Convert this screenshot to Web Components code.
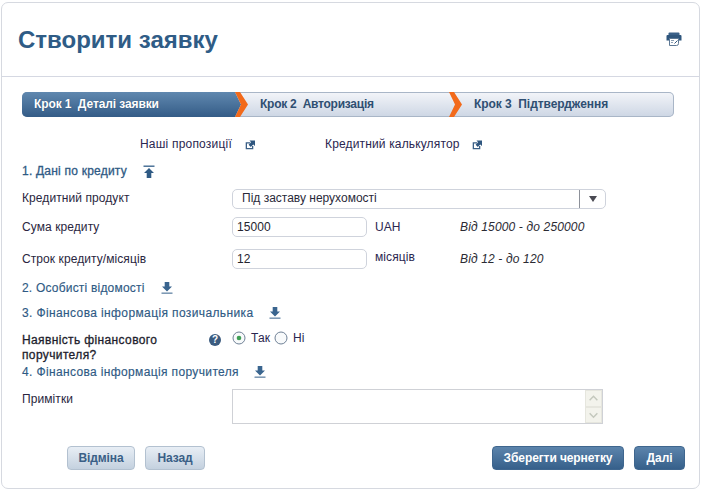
<!DOCTYPE html>
<html lang="uk"><head><meta charset="utf-8"><title>Створити заявку</title>
<style>
html,body{margin:0;padding:0;background:#fff}
body{font:12px/15px "Liberation Sans",Arial,sans-serif;color:#2a2640;width:702px;height:491px;overflow:hidden}
</style></head><body>
<app-card>
  <app-header slot="header" title-text="Створити заявку"></app-header>
  <step-bar></step-bar>
  <link-row></link-row>
  <section-title icon="up" gap="16" style="margin-top:6px;letter-spacing:.22px;-webkit-text-stroke:.3px #2f5a84">1. Дані по кредиту</section-title>
  <form-row label="Кредитний продукт" style="margin-top:8px;height:20px;--lh:19px"><select-box>Під заставу нерухомості</select-box></form-row>
  <form-row label="Сума кредиту" style="margin-top:8px;height:20px"><text-box>15000</text-box><unit-hint unit="UAH" hint="Від 15000 - до 250000"></unit-hint></form-row>
  <form-row label="Строк кредиту/місяців" style="margin-top:12px;height:20px"><text-box>12</text-box><unit-hint up unit="місяців" hint="Від 12 - до 120"></unit-hint></form-row>
  <section-title icon="down" gap="16" style="margin-top:9px;letter-spacing:.2px">2. Особисті відомості</section-title>
  <section-title icon="down" gap="15" style="margin-top:5px;letter-spacing:.38px">3. Фінансова інформація позичальника</section-title>
  <yes-no style="margin-top:10px"></yes-no>
  <section-title icon="down" gap="15" style="margin-top:-2px;letter-spacing:.36px">4. Фінансова інформація поручителя</section-title>
  <form-row label="Примітки" style="margin-top:7px;height:35px"><note-box></note-box></form-row>
  <button-bar></button-bar>
</app-card>
<script>
const el=(name,html)=>customElements.define(name,class extends HTMLElement{
  constructor(){super();this.attachShadow({mode:'open'}).innerHTML=typeof html==='function'?html(this):html;}
});
el('app-card',`<style>
:host{display:block;box-sizing:border-box;width:699px;height:487px;margin:2px 0 0 1px;border:1px solid #d6d9e0;border-radius:7px;background:#fff}
.body{display:flex;flex-direction:column;padding:15px 0 0 20px}
</style><slot name="header"></slot><div class="body"><slot></slot></div>`);
el('app-header',`<style>
:host{display:flex;box-sizing:border-box;height:74px;align-items:center;justify-content:space-between;border-bottom:1px solid #d5d8e2;padding:1px 17px 0 16px}
h1{margin:0;font:bold 24px/30px "Liberation Sans",Arial,sans-serif;color:#2f5c86}
svg{display:block;margin-top:-2px}
</style><h1>Створити заявку</h1>
<svg width="16" height="14" viewBox="0 0 16 14"><path d="M2.5 1.5Q2.5 .5 3.5 .5h9Q13.500 .5 13.500 1.500V3h-11z" fill="#3a6088"/><path d="M.5 4Q.5 3 1.500 3h13Q15.500 3 15.500 4V8.500H.5z" fill="#2f567d"/><path d="M3.500 6.500h9V11.500Q12.500 13.500 10.500 13.500h-7z" fill="#fff" stroke="#5d7894"/><path d="M5 8.500h3M5 10.500h2" stroke="#8ba0b5"/><path d="M8.500 11.500l3-3" stroke="#35597e"/></svg>`);
el('step-bar',`<style>
:host{display:flex;box-sizing:border-box;width:652px;height:25px;border-radius:5px;overflow:hidden;background:linear-gradient(#f3f5f9,#cdd6e4);box-shadow:inset 0 0 0 1px #a9b6c7;font:bold 12px/25px "Liberation Sans",Arial,sans-serif;color:#2f4f72;letter-spacing:-.1px}
.s{white-space:pre;box-sizing:border-box;overflow:hidden}
.a{width:213px;padding-left:12px;color:#fff;background:linear-gradient(#6088af,#345c87);text-shadow:0 0 1px #2a4a6c}
.b{width:201px;padding-left:12px;letter-spacing:-.25px}
.c{flex:1;padding-left:12px;letter-spacing:-.05px}
svg{display:block;flex:none}
</style>
<div class="s a">Крок 1  Деталі заявки</div>
<svg width="13" height="25" viewBox="0 0 13 25"><defs><linearGradient id="g" x1="0" y1="0" x2="0" y2="1"><stop offset="0" stop-color="#6088af"/><stop offset="1" stop-color="#345c87"/></linearGradient></defs><path d="M0 0L6 12.500 0 25z" fill="url(#g)"/><path d="M0 0H5L13 12.500 5 25H0L6 12.500z" fill="#f26a1b"/></svg>
<div class="s b">Крок 2  Авторизація</div>
<svg width="13" height="25" viewBox="0 0 13 25"><path d="M0 0H5L13 12.500 5 25H0L6 12.500z" fill="#f26a1b"/></svg>
<div class="s c">Крок 3  Підтвердження</div>`);
const ext=`<svg width="10" height="10" viewBox="0 0 10 10" style="display:block;flex:none"><path d="M.7 2.200h4.500v1.300H2v4.400h5V6h1.300v3.200H.7z" fill="#3a5f86"/><path d="M4.500 .5H10V6L8.300 4.400 5.800 6.900 3.600 4.700 6.100 2.200z" fill="#2f567f"/></svg>`;
el('link-row',`<style>
:host{display:flex;height:21px;margin-top:17px;align-items:center;color:#2a2650}
span{white-space:nowrap}
.a{margin-left:118px;width:105px;letter-spacing:.2px}.b{margin-left:70px;width:147px;letter-spacing:.15px}
</style><span class="a">Наші пропозиції</span>${ext}<span class="b">Кредитний калькулятор</span>${ext}`);
const icons={
 up:`<svg width="12" height="13" viewBox="0 0 12 13" style="display:block"><path d="M.5 .5h11v1.400H.5z" fill="#3f6890"/><path d="M6 3L11 8H8.300V13H3.700V8H1z" fill="#2f5a84"/></svg>`,
 down:`<svg width="12" height="12" viewBox="0 0 12 12" style="display:block"><path d="M3.700 0H8.300V4.500H11L6 9.500 1 4.500H3.700z" fill="#3a658f"/><path d="M.5 10.400h11V12H.5z" fill="#7f9ab5"/></svg>`};
el('section-title',t=>`<style>
:host{display:flex;height:20px;align-items:center;color:#2f5a84;white-space:nowrap;-webkit-text-stroke:.15px #2f5a84}
i{display:block;margin-left:${t.getAttribute('gap')}px}
</style><slot></slot><i>${icons[t.getAttribute('icon')]}</i>`);
el('form-row',t=>`<style>
:host{display:grid;grid-template-columns:210px 1fr;align-items:start}
.l{line-height:var(--lh,21px);white-space:nowrap;color:#2a2640;letter-spacing:.08px}
.c{display:flex;align-items:flex-start;height:100%}
</style><div class="l">${t.getAttribute('label')}</div><div class="c"><slot></slot></div>`);
el('select-box',`<style>
:host{display:flex;box-sizing:border-box;width:374px;height:20px;border:1px solid #cfd3dc;border-radius:5px;line-height:16px;color:#2a2a3a;background:#fff}
.t{flex:1;padding-left:9px;white-space:nowrap}
.b{width:25px;border-left:1px solid #8d919a;display:flex;align-items:center;justify-content:center}
.b i{display:block;width:0;height:0;border:4.500px solid transparent;border-top:6px solid #4a4a52;border-bottom:0}
</style><div class="t" role="combobox"><slot></slot></div><div class="b"><i></i></div>`);
el('text-box',`<style>
:host{display:block;box-sizing:border-box;width:135px;height:20px;border:1px solid #cfd3dc;border-radius:5px;padding:1px 4px 0 4px;line-height:16px;color:#24242e;background:#fff;letter-spacing:.1px}
</style><slot></slot>`);
el('unit-hint',t=>`<style>
:host{display:grid;grid-template-columns:85px auto;margin-left:8px;line-height:21px;white-space:nowrap}
.u{color:#2a2650;letter-spacing:.1px;${t.hasAttribute('up')?'margin-top:-2px':''}}
.h{font-style:italic;color:#2b2b33;letter-spacing:.15px}
</style><div class="u">${t.getAttribute('unit')}</div><div class="h">${t.getAttribute('hint')}</div>`);
const radio=on=>`<svg width="14" height="14" viewBox="0 0 14 14" style="display:block;flex:none"><circle cx="7" cy="7" r="6" fill="#f8fafb" stroke="#6f8196"/>${on?'<circle cx="7" cy="7" r="2.300" fill="#3f9f55"/>':''}</svg>`;
el('yes-no',`<style>
:host{display:grid;grid-template-columns:210px 1fr;height:31px}
.wrap{display:grid;grid-template-columns:187px 12px;align-items:start}
.l{color:#1d1d2c;-webkit-text-stroke:.3px #1d1d2c;width:170px;letter-spacing:.37px}
.q{display:flex;align-items:center;justify-content:center;width:12px;height:12px;margin-top:1px;border-radius:50%;background:#3b5b7f;color:#fff;font:bold 10px/12px "Liberation Sans",Arial,sans-serif}
.w{display:flex;align-items:flex-start}
.o{display:flex;align-items:center;height:14px;margin-top:-2px;color:#2a2650;letter-spacing:.1px}
.o span{margin-left:5px}
.o+.o{margin-left:4px}
</style><div class="wrap"><div class="l">Наявність фінансового поручителя?</div><div class="q">?</div></div>
<div class="w"><div class="o">${radio(true)}<span>Так</span></div><div class="o">${radio(false)}<span>Ні</span></div></div>`);
el('note-box',`<style>
:host{display:flex;box-sizing:border-box;width:371px;height:35px;border:1px solid #cfd1d6;background:#fff;justify-content:flex-end}
.s{width:17px;display:flex;flex-direction:column;background:#f3f3ec}
.s svg{display:block;flex:1;border:1px solid #e6e6de;box-sizing:border-box}
</style><div class="s">
<svg viewBox="0 0 15 15" width="17" height="16"><path d="M3.500 9.500L7.500 5.500 11.500 9.500" fill="none" stroke="#c4c8bd" stroke-width="1.500"/></svg>
<svg viewBox="0 0 15 15" width="17" height="16"><path d="M3.500 5.500L7.500 9.500 11.500 5.500" fill="none" stroke="#c4c8bd" stroke-width="1.500"/></svg></div>`);
el('app-button',`<style>
:host{display:flex;box-sizing:border-box;height:24px;align-items:center;justify-content:center;border-radius:4px;font:bold 12px/20px "Liberation Sans",Arial,sans-serif;white-space:nowrap;letter-spacing:-.1px}
:host([kind=light]){background:linear-gradient(#e8eef5,#c4d1df);border:1px solid #b3c1d0;color:#3a5f86}
:host([kind=dark]){background:linear-gradient(#5c84ac,#36608b);border:1px solid #3f668e;color:#fff}
</style><slot></slot>`);
el('button-bar',`<style>
:host{display:flex;margin:22px 0 0 45px;width:618px}
.sp{flex:1}
</style>
<app-button kind="light" style="width:68px">Відміна</app-button>
<app-button kind="light" style="width:60px;margin-left:10px">Назад</app-button>
<div class="sp"></div>
<app-button kind="dark" style="width:132px">Зберегти чернетку</app-button>
<app-button kind="dark" style="width:51px;margin-left:10px">Далі</app-button>`);
</script>
</body></html>
